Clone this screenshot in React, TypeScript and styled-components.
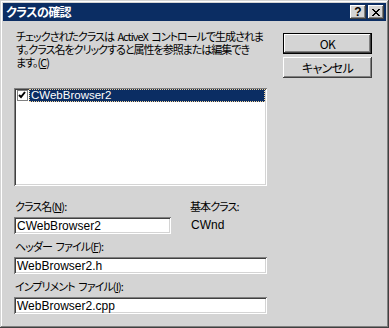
import React from 'react';
import styled, { createGlobalStyle } from 'styled-components';

const FACE = '#d4d4d4';
const NAVY = '#0b2d63';
const FONT = '"Noto Sans CJK JP", "Liberation Sans", sans-serif';

const GlobalStyle = createGlobalStyle`
  html, body {
    margin: 0;
    padding: 0;
    background: ${FACE};
  }
  * { box-sizing: border-box; }
`;

const Window = styled.div`
  width: 389px;
  height: 328px;
  padding: 3px;
  background: ${FACE};
  font-family: ${FONT};
  font-size: 11px;
  font-feature-settings: "palt";
  letter-spacing: -0.9px;
  color: #000;
  box-shadow: inset -1px -1px 0 #404040, inset 1px 1px 0 ${FACE},
    inset -2px -2px 0 #808080, inset 2px 2px 0 #ffffff;
  display: flex;
  flex-direction: column;
`;

const TitleBar = styled.div`
  height: 18px;
  background: ${NAVY};
  display: flex;
  align-items: center;
  justify-content: space-between;
  padding: 0 2px 0 3px;
`;

const TitleText = styled.span`
  color: #fff;
  font-weight: bold;
  font-size: 12px;
  line-height: 18px;
  letter-spacing: -0.6px;
`;

const CaptionButtons = styled.div`
  display: flex;
  gap: 2px;
`;

const CaptionButton = styled.div`
  width: 16px;
  height: 14px;
  background: ${FACE};
  box-shadow: inset -1px -1px 0 #404040, inset 1px 1px 0 #ffffff,
    inset -2px -2px 0 #808080;
  display: flex;
  align-items: center;
  justify-content: center;
  font-family: "Liberation Sans", sans-serif;
  font-weight: bold;
  font-size: 12px;
  letter-spacing: 0;
  line-height: 1;
`;

const Body = styled.div`
  flex: 1;
  display: flex;
  gap: 16px;
  padding: 9px 0 0 11px;
`;

const Main = styled.div`
  width: 253px;
  display: flex;
  flex-direction: column;
`;

const Intro = styled.div`
  display: flex;
  flex-direction: column;
  padding-left: 2px;
  letter-spacing: -1px;
  word-spacing: 2px;
`;

const IntroLine = styled.div`
  height: 13px;
  line-height: 13px;
  white-space: nowrap;
`;

const ListBox = styled.div`
  margin-top: 19px;
  height: 98px;
  background: #fff;
  padding: 1px 2px 2px 2px;
  box-shadow: inset 1px 1px 0 #808080, inset -1px -1px 0 #ffffff,
    inset 2px 2px 0 #404040, inset -2px -2px 0 ${FACE};
`;

const ListItem = styled.div`
  display: flex;
  align-items: center;
  height: 13px;
  padding-left: 1px;
`;

const CheckBox = styled.div`
  width: 11px;
  height: 11px;
  border: 1px solid #808080;
  background: #fff;
  display: flex;
  align-items: center;
  justify-content: center;
  margin-right: 1px;
`;

const ItemText = styled.div<{ $selected?: boolean }>`
  flex: 1;
  height: 13px;
  line-height: 11px;
  padding-left: 1px;
  font-family: "Liberation Sans", sans-serif;
  font-size: 11.5px;
  letter-spacing: 0;
  background: ${({ $selected }) => ($selected ? NAVY : 'transparent')};
  color: ${({ $selected }) => ($selected ? '#fff' : '#000')};
  border: 1px dotted ${({ $selected }) => ($selected ? '#f3d49a' : 'transparent')};
`;

const FieldRow = styled.div`
  display: flex;
  gap: 18px;
`;

const Field = styled.div<{ $width?: number; $top: number }>`
  display: flex;
  flex-direction: column;
  gap: 4px;
  margin-top: ${({ $top }) => $top}px;
  width: ${({ $width }) => ($width ? `${$width}px` : 'auto')};
`;

const Label = styled.div`
  height: 13px;
  line-height: 13px;
  white-space: nowrap;
  padding-left: 1px;
  word-spacing: 2px;
  u { text-underline-offset: 1px; }
`;

const TextBox = styled.input`
  height: 17px;
  width: 100%;
  border: none;
  outline: none;
  padding: 1px 3px 0 3px;
  font-family: "Liberation Sans", sans-serif;
  font-size: 12px;
  letter-spacing: 0;
  color: #000;
  background: #fff;
  box-shadow: inset 1px 1px 0 #808080, inset -1px -1px 0 #ffffff,
    inset 2px 2px 0 #404040, inset -2px -2px 0 ${FACE};
`;

const StaticValue = styled.div`
  height: 17px;
  line-height: 17px;
  padding-left: 2px;
  font-family: "Liberation Sans", sans-serif;
  font-size: 12px;
  letter-spacing: 0;
`;

const Side = styled.div`
  width: 89px;
  padding-top: 3px;
  display: flex;
  flex-direction: column;
  gap: 3px;
`;

const Button = styled.div<{ $default?: boolean }>`
  height: 21px;
  display: flex;
  align-items: center;
  justify-content: center;
  background: ${FACE};
  border: ${({ $default }) => ($default ? '1px solid #000' : 'none')};
  box-shadow: inset -1px -1px 0 #404040, inset 1px 1px 0 #ffffff,
    inset -2px -2px 0 #808080;
  font-size: 12px;
  letter-spacing: -0.6px;
`;

const CheckMark = () => (
  <svg width="9" height="9" viewBox="0 0 9 9">
    <path d="M1 4 L3 6 L7 1" stroke="#000" strokeWidth="2" fill="none" />
  </svg>
);

const CloseGlyph = () => (
  <svg width="8" height="7" viewBox="0 0 8 7" shapeRendering="crispEdges">
    <path d="M0 0h2v1h-2zM6 0h2v1h-2zM1 1h2v1h-2zM5 1h2v1h-2zM2 2h4v1h-4zM3 3h2v1h-2zM2 4h4v1h-4zM1 5h2v1h-2zM5 5h2v1h-2zM0 6h2v1h-2zM6 6h2v1h-2z" fill="#000" />
  </svg>
);

export default function App() {
  return (
    <>
      <GlobalStyle />
      <Window>
        <TitleBar>
          <TitleText>クラスの確認</TitleText>
          <CaptionButtons>
            <CaptionButton>?</CaptionButton>
            <CaptionButton><CloseGlyph /></CaptionButton>
          </CaptionButtons>
        </TitleBar>
        <Body>
          <Main>
            <Intro>
              <IntroLine>チェックされたクラスは ActiveX コントロールで生成されま</IntroLine>
              <IntroLine>す。クラス名をクリックすると属性を参照または編集でき</IntroLine>
              <IntroLine>ます。(<u>C</u>)</IntroLine>
            </Intro>
            <ListBox>
              <ListItem>
                <CheckBox><CheckMark /></CheckBox>
                <ItemText $selected>CWebBrowser2</ItemText>
              </ListItem>
            </ListBox>
            <FieldRow>
              <Field $width={157} $top={14}>
                <Label>クラス名(<u>N</u>):</Label>
                <TextBox readOnly value="CWebBrowser2" />
              </Field>
              <Field $top={14}>
                <Label>基本クラス:</Label>
                <StaticValue>CWnd</StaticValue>
              </Field>
            </FieldRow>
            <Field $top={6}>
              <Label>ヘッダー ファイル(<u>F</u>):</Label>
              <TextBox readOnly value="WebBrowser2.h" />
            </Field>
            <Field $top={6}>
              <Label>インプリメント ファイル(<u>I</u>):</Label>
              <TextBox readOnly value="WebBrowser2.cpp" />
            </Field>
          </Main>
          <Side>
            <Button $default>OK</Button>
            <Button>キャンセル</Button>
          </Side>
        </Body>
      </Window>
    </>
  );
}
